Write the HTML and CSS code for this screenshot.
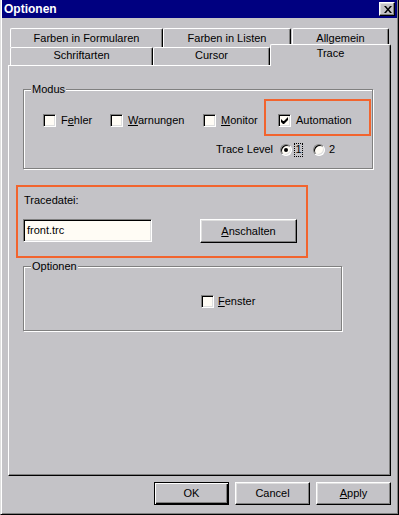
FILE: index.html
```html
<!DOCTYPE html>
<html lang="de">
<head>
<meta charset="utf-8">
<title>Optionen</title>
<link rel="stylesheet" href="styles.css">
</head>
<body>
<div class="window">
  <div class="titlebar">
    <span class="title">Optionen</span>
    <span class="close">
      <svg width="8" height="7" viewBox="0 0 8 7"><path d="M0 0h2l2 2.5 2-2.5h2l-3 3.5 3 3.5h-2l-2-2.5-2 2.5h-2l3-3.5z" fill="#000"/></svg>
    </span>
  </div>
  <div class="main">
    <div class="tabs">
      <div class="tabrow back">
        <div class="tab w-ff">Farben in Formularen</div>
        <div class="tab w-fl">Farben in Listen</div>
        <div class="tab w-al">Allgemein</div>
      </div>
      <div class="tabrow front">
        <div class="tab w-sa">Schriftarten</div>
        <div class="tab w-cu">Cursor</div>
        <div class="tab active w-tr">Trace</div>
      </div>
    </div>
    <div class="panel">
      <div class="group modus">
        <div class="legend">Modus</div>
        <div class="cbrow">
          <div class="item i-fehler"><span class="cb"></span><span>F<u>e</u>hler</span></div>
          <div class="item i-warn"><span class="cb"></span><span><u>W</u>arnungen</span></div>
          <div class="item i-mon"><span class="cb"></span><span><u>M</u>onitor</span></div>
          <div class="highlight hl-auto">
            <div class="item"><span class="cb"><svg width="7" height="7" viewBox="0 0 7 7"><path d="M0 2v3l2 2h1l4-4v-3l-4 4h-1z" fill="#000"/></svg></span><span>Automation</span></div>
          </div>
        </div>
        <div class="levelrow">
          <span class="lvl-label">Trace Level</span>
          <span class="radio"><span class="dot"></span></span>
          <span class="focus">1</span>
          <span class="radio r2"></span>
          <span class="rlabel">2</span>
        </div>
      </div>
      <div class="highlight hl-file">
        <div class="lbl">Tracedatei:</div>
        <div class="filerow">
          <div class="input">front.trc</div>
          <div class="btn wide"><u>A</u>nschalten</div>
        </div>
      </div>
      <div class="group optionen">
        <div class="legend">Optionen</div>
        <div class="item i-fenster"><span class="cb"></span><span><u>F</u>enster</span></div>
      </div>
    </div>
    <div class="buttons">
      <div class="btn default">OK</div>
      <div class="btn">Cancel</div>
      <div class="btn"><u>A</u>pply</div>
    </div>
  </div>
</div>
</body>
</html>
```
FILE: styles.css
```css
* { box-sizing: border-box; }
html, body { margin: 0; padding: 0; background: #c4c3c7; }
body {
  font-family: "Liberation Sans", Arial, sans-serif;
  font-size: 11px;
  line-height: 13px;
  color: #000;
}
u { text-decoration: underline; text-underline-offset: 1px; }

.window {
  width: 399px;
  height: 515px;
  background: #c4c3c7;
  border: 1px solid;
  border-top: 0;
  border-color: #dfdfdf #000 #000 #dfdfdf;
  box-shadow: inset 1px 0 #fff, inset -1px -1px #808080;
}

.titlebar {
  height: 18px;
  margin: 0 1px;
  background: #000080;
  display: flex;
  align-items: center;
  justify-content: space-between;
  padding-left: 2px;
  padding-right: 2px;
}
.title {
  color: #fff;
  font-weight: bold;
  font-size: 12px;
  line-height: 18px;
}
.close {
  width: 16px;
  height: 14px;
  background: #c4c3c7;
  border: 1px solid;
  border-color: #fff #000 #000 #fff;
  box-shadow: inset -1px -1px #808080, inset 1px 1px #dfdfdf;
  display: flex;
  align-items: center;
  justify-content: center;
  padding-left: 1px;
}
.close svg { display: block; }

.main { padding: 0 7px; }

.tabs { margin-top: 10px; padding-left: 2px; }
.tabrow { display: flex; }
.tabrow.back { height: 19px; }
.tabrow.front { height: 18px; align-items: flex-end; }

.tab {
  background: #c4c3c7;
  border-top: 1px solid #fff;
  border-left: 1px solid #fff;
  border-right: 1px solid #000;
  border-radius: 2px 2px 0 0;
  box-shadow: inset -1px 0 #808080;
  text-align: center;
  white-space: nowrap;
}
.back .tab { height: 19px; padding-top: 3px; }
.front .tab { height: 18px; padding-top: 1px; }
.w-ff { width: 153px; }
.w-fl { width: 128px; }
.w-al { width: 97px; margin-left: 1px; }
.w-sa { width: 143px; }
.w-cu { width: 117px; }
.tab.active.w-tr {
  width: 121px;
  height: 22px;
  margin-bottom: -1px;
  padding-top: 2px;
  position: relative;
  z-index: 1;
}

.panel {
  width: 383px;
  height: 411px;
  border: 1px solid;
  border-color: #fff #000 #000 #fff;
  box-shadow: inset -1px -1px #808080;
  display: flex;
  flex-direction: column;
  align-items: flex-start;
}

.group {
  border: 1px solid #808080;
  box-shadow: 1px 1px 0 #fff, inset 1px 1px 0 #fff;
}
.legend {
  margin: -7px 0 0 7px;
  padding: 0 1px;
  background: #c4c3c7;
  width: fit-content;
  line-height: 13px;
}
.modus {
  width: 350px;
  height: 80px;
  margin: 23px 0 0 14px;
}
.optionen {
  width: 319px;
  height: 65px;
  margin: 8px 0 0 14px;
}

.cbrow {
  display: flex;
  align-items: flex-start;
  margin-top: 3px;
  padding-left: 19px;
}
.item {
  display: flex;
  align-items: center;
  gap: 5px;
  height: 13px;
  white-space: nowrap;
}
.cbrow > .item { margin-top: 15px; }
.i-fehler { width: 67px; }
.i-warn { width: 93px; }
.i-mon { width: 61px; }
.i-fenster { margin: 22px 0 0 177px; gap: 4px; }

.cb {
  width: 13px;
  height: 13px;
  flex: none;
  background: #fffcf5;
  border: 1px solid;
  border-color: #808080 #fff #fff #808080;
  box-shadow: inset 1px 1px #000, inset -1px -1px #dfdfdf;
  display: flex;
  align-items: center;
  justify-content: center;
}
.cb svg { display: block; }

.highlight { border: 2px solid #f2642e; }
.hl-auto {
  width: 107px;
  height: 37px;
  padding: 13px 0 0 12px;
}

.levelrow {
  display: flex;
  align-items: center;
  height: 13px;
  margin-top: 7px;
  padding-left: 192px;
}
.lvl-label { width: 64px; white-space: nowrap; }
.radio {
  width: 12px;
  height: 12px;
  flex: none;
  border-radius: 50%;
  background: #fffcf5;
  border: 1px solid;
  border-color: #808080 #fff #fff #808080;
  box-shadow: inset 1px 1px #000, inset -1px -1px #dfdfdf;
  display: flex;
  align-items: center;
  justify-content: center;
}
.dot { width: 4px; height: 4px; border-radius: 50%; background: #000; }
.focus {
  margin-left: 2px;
  width: 9px;
  height: 14px;
  border: 1px dotted #000;
  display: flex;
  align-items: center;
  justify-content: center;
}
.r2 { margin-left: 10px; }
.rlabel { margin-left: 4px; }

.hl-file {
  width: 292px;
  height: 73px;
  margin: 16px 0 0 7px;
  padding: 7px 0 0 5px;
}
.lbl { margin-left: 1px; }
.filerow {
  display: flex;
  align-items: flex-start;
  margin-top: 12px;
}
.input {
  width: 129px;
  height: 23px;
  background: #fffcf5;
  border: 1px solid;
  border-color: #808080 #fff #fff #808080;
  box-shadow: inset 1px 1px #000, inset -1px -1px #dfdfdf;
  padding: 4px 0 0 3px;
}

.btn {
  width: 75px;
  height: 23px;
  border: 1px solid;
  border-color: #fff #000 #000 #fff;
  box-shadow: inset -1px -1px #808080, inset 1px 1px #dfdfdf;
  display: flex;
  align-items: center;
  justify-content: center;
  white-space: nowrap;
}
.btn.wide { width: 97px; height: 24px; margin-left: 48px; }
.btn.default {
  border-color: #000;
  box-shadow: inset 1px 1px #fff, inset -1px -1px #000, inset -2px -2px #808080;
}

.buttons {
  display: flex;
  justify-content: flex-end;
  gap: 6px;
  margin-top: 6px;
}
```
